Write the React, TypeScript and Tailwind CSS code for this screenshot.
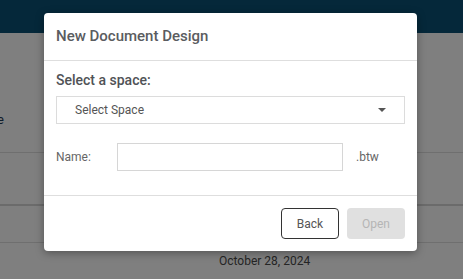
import React from 'react';

const App: React.FC = () => {
  return (
    <div className="relative h-[279px] w-[463px] overflow-hidden bg-white" style={{ fontFamily: 'Roboto, "Liberation Sans", sans-serif' }}>
      {/* Page behind the dialog */}
      <div className="h-[33px] bg-[#0b5175]"></div>
      <div className="flex flex-col">
        <div className="flex h-[120px] items-center border-b border-[#dedede] pt-[54px] text-[13px] text-[#1f3a55]">
          <span className="-ml-[3px]">e</span>
        </div>
        <div className="h-[53px] border-b-2 border-[#d6d6d6]"></div>
        <div className="h-[37px] border-b border-[#dedede]"></div>
        <div className="flex h-[36px] items-center pl-[219px] text-[12px] text-[#4a4a4a]">October 28, 2024</div>
      </div>

      {/* Overlay */}
      <div className="absolute inset-0 bg-black/50"></div>

      {/* Dialog */}
      <div className="absolute left-[44px] top-[13px] flex w-[373px] flex-col rounded-[4px] bg-white shadow-[0_2px_8px_rgba(0,0,0,0.35)]">
        <div className="flex h-[48px] items-center border-b border-[#dedede] px-[12px] text-[15px] font-medium text-[#5a5c60]">
          New Document Design
        </div>

        <div className="flex flex-col px-[12px] pb-[24px] pt-[9px]">
          <div className="h-[21px] text-[14px] font-medium leading-[21px] text-[#505256]">Select a space:</div>
          <div className="mt-[5px] flex h-[28px] items-center justify-between border border-[#dcdcdc] pl-[18px] pr-[18px] text-[12px] text-[#555]">
            <span>Select Space</span>
            <svg width="8" height="4" viewBox="0 0 8 4">
              <path d="M0 0 L8 0 L4 4 Z" fill="#555" />
            </svg>
          </div>
          <div className="mt-[19px] flex h-[28px] items-center text-[12px] text-[#666]">
            <span className="w-[61px]">Name:</span>
            <input className="h-[28px] w-[226px] border border-[#d6d6d6] outline-none" />
            <span className="ml-[13px]">.btw</span>
          </div>
        </div>

        <div className="flex h-[56px] items-start justify-end gap-[8px] border-t border-[#dedede] px-[12px] pt-[12px]">
          <button className="h-[31px] w-[58px] rounded-[4px] border border-[#333] bg-white text-[12px] text-[#555]">Back</button>
          <button className="h-[31px] w-[58px] rounded-[4px] bg-[#e0e0e0] text-[12px] text-[#b5b5b5]">Open</button>
        </div>
      </div>
    </div>
  );
};

export default App;
